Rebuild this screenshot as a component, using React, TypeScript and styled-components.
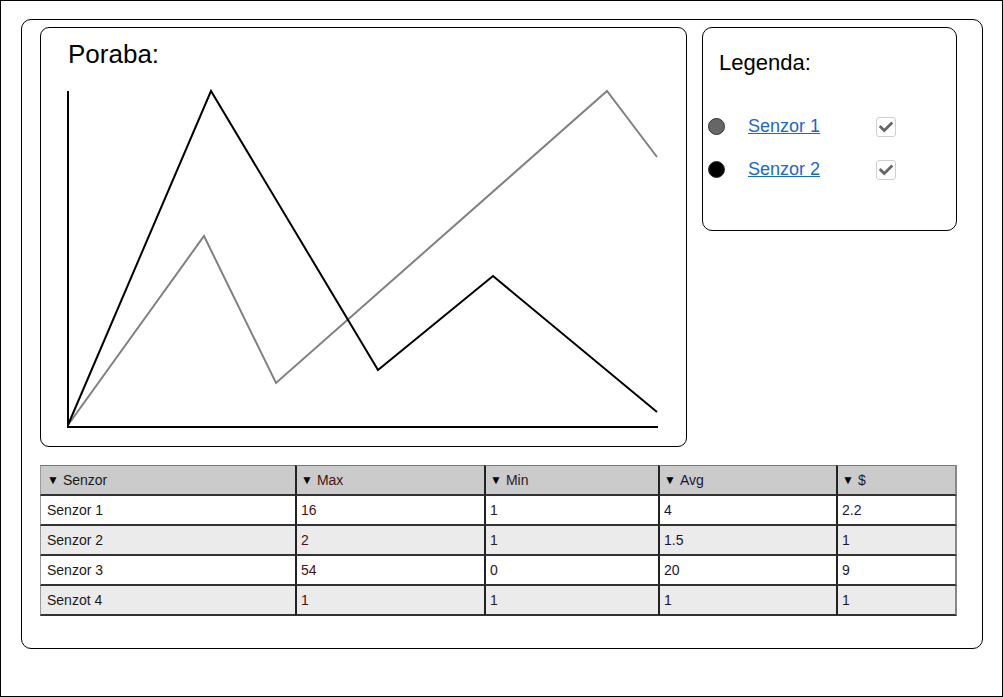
import React from "react";
import styled, { createGlobalStyle } from "styled-components";
import { FaCheck } from "react-icons/fa";

const Global = createGlobalStyle`
  html, body { margin: 0; padding: 0; background: #fff; }
  body { font-family: "Liberation Sans", Arial, sans-serif; color: #000; }
  * { box-sizing: border-box; }
`;

const Frame = styled.div`
  width: 1003px;
  height: 697px;
  border: 1px solid #000;
  padding: 18px 0 0 20px;
`;

const Container = styled.div`
  width: 962px;
  height: 630px;
  border: 1px solid #000;
  border-radius: 10px;
  padding: 7px 23px 0 18px;
  display: grid;
  grid-template-columns: 647px 255px;
  grid-template-rows: 420px auto;
  column-gap: 15px;
  row-gap: 18px;
  align-items: start;
`;

const ChartPanel = styled.section`
  height: 420px;
  border: 1px solid #000;
  border-radius: 9px;
  padding-top: 11px;
  display: flex;
  flex-direction: column;
`;

const ChartTitle = styled.h2`
  margin: 0 0 0 27px;
  font-size: 26px;
  line-height: 30px;
  font-weight: normal;
`;

const ChartSvg = styled.svg`
  display: block;
  width: 645px;
  height: 376px;
`;

const LegendPanel = styled.section`
  height: 204px;
  border: 1px solid #000;
  border-radius: 10px;
  padding: 22px 0 0 5px;
`;

const LegendTitle = styled.h3`
  margin: 0 0 30px 11px;
  font-size: 22px;
  line-height: 25px;
  font-weight: normal;
`;

const LegendRow = styled.div`
  display: flex;
  align-items: center;
  height: 43px;
`;

const Dot = styled.span<{ $color: string }>`
  width: 17px;
  height: 17px;
  border-radius: 50%;
  background: ${(p) => p.$color};
  border: 1px solid #333;
  margin-right: 23px;
  flex: none;
`;

const SensorLink = styled.a`
  width: 128px;
  font-size: 18px;
  color: #1a66d2;
  text-decoration: underline;
  cursor: pointer;
`;

const CheckBox = styled.span`
  width: 20px;
  height: 20px;
  border: 1px solid #cfcfcf;
  border-radius: 3px;
  display: flex;
  align-items: center;
  justify-content: center;
  color: #666;
  background: #fff;
`;

const Table = styled.div`
  grid-column: 1 / span 2;
  display: grid;
  grid-template-columns: 255px 189px 174px 178px 121px;
  font-size: 14px;
`;

const Cell = styled.div<{ $head?: boolean; $alt?: boolean; $col: number }>`
  height: ${(p) => (p.$head ? 31 : 30)}px;
  display: flex;
  align-items: center;
  padding-left: ${(p) => (p.$col === 0 ? 6 : 4)}px;
  background: ${(p) => (p.$head ? "#cbcbcb" : p.$alt ? "#ebebeb" : "#fff")};
  border-top: ${(p) => (p.$head ? "1px solid #777" : "0")};
  border-bottom: 2px solid #333;
  border-left: ${(p) => (p.$col === 0 ? "1px solid #999" : "2px solid #222")};
  border-right: ${(p) => (p.$col === 4 ? "2px solid #888" : "0")};
  color: ${(p) => ["#1a1a1a", "#4a1212", "#2a2020", "#14143a", "#1a1a3a"][p.$col]};
  white-space: nowrap;
`;

const Arrow = styled.span`
  font-size: 12px;
  margin-right: 4px;
  color: #000;
`;

const headers = ["Senzor", "Max", "Min", "Avg", "$"];
const rows = [
  ["Senzor 1", "16", "1", "4", "2.2"],
  ["Senzor 2", "2", "1", "1.5", "1"],
  ["Senzor 3", "54", "0", "20", "9"],
  ["Senzot 4", "1", "1", "1", "1"],
];

const blackLine = "27,356 170,22 337,301 452,207 616,343";
const grayLine = "27,356 163,167 235,314 566,22 616,88";

export default function App() {
  return (
    <>
      <Global />
      <Frame>
        <Container>
          <ChartPanel>
            <ChartTitle>Poraba:</ChartTitle>
            <ChartSvg viewBox="0 0 645 376">
              <line x1="27" y1="22" x2="27" y2="359" stroke="#000" strokeWidth="2" />
              <line x1="26" y1="358" x2="617" y2="358" stroke="#000" strokeWidth="2" />
              <polyline points={grayLine} fill="none" stroke="#808080" strokeWidth="2" />
              <polyline points={blackLine} fill="none" stroke="#000" strokeWidth="2" />
            </ChartSvg>
          </ChartPanel>
          <LegendPanel>
            <LegendTitle>Legenda:</LegendTitle>
            <LegendRow>
              <Dot $color="#666" />
              <SensorLink>Senzor 1</SensorLink>
              <CheckBox>
                <FaCheck size={14} />
              </CheckBox>
            </LegendRow>
            <LegendRow>
              <Dot $color="#000" />
              <SensorLink>Senzor 2</SensorLink>
              <CheckBox>
                <FaCheck size={14} />
              </CheckBox>
            </LegendRow>
          </LegendPanel>
          <Table>
            {headers.map((h, i) => (
              <Cell key={h} $head $col={i}>
                <Arrow>▼</Arrow>
                {h}
              </Cell>
            ))}
            {rows.map((r, ri) =>
              r.map((v, ci) => (
                <Cell key={`${ri}-${ci}`} $alt={ri % 2 === 1} $col={ci}>
                  {v}
                </Cell>
              ))
            )}
          </Table>
        </Container>
      </Frame>
    </>
  );
}
